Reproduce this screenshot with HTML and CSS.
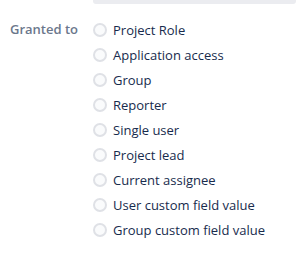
FILE: index.html
```html
<!DOCTYPE html>
<html lang="en">
<head>
    <meta charset="UTF-8">
    <title>Grant permission</title>
    <link rel="stylesheet" href="styles.css">
</head>
<body>
    <div class="field-row">
        <div class="field-label"></div>
        <div class="prev-input"></div>
    </div>
    <div class="field-row granted">
        <div class="field-label">Granted to</div>
        <div class="radio-list">
            <label class="radio"><input type="radio" name="grant"><span class="dot"></span>Project Role</label>
            <label class="radio"><input type="radio" name="grant"><span class="dot"></span>Application access</label>
            <label class="radio"><input type="radio" name="grant"><span class="dot"></span>Group</label>
            <label class="radio"><input type="radio" name="grant"><span class="dot"></span>Reporter</label>
            <label class="radio"><input type="radio" name="grant"><span class="dot"></span>Single user</label>
            <label class="radio"><input type="radio" name="grant"><span class="dot"></span>Project lead</label>
            <label class="radio"><input type="radio" name="grant"><span class="dot"></span>Current assignee</label>
            <label class="radio"><input type="radio" name="grant"><span class="dot"></span>User custom field value</label>
            <label class="radio"><input type="radio" name="grant"><span class="dot"></span>Group custom field value</label>
        </div>
    </div>
</body>
</html>
```

FILE: styles.css
```css
body {
    margin: 0;
    background: #fff;
    font-family: "Open Sans", "Noto Sans", sans-serif;
    font-size: 13px;
    color: #172b4d;
}
.field-row {
    display: flex;
}
.field-label {
    width: 93px;
    flex-shrink: 0;
    box-sizing: border-box;
    padding-left: 10px;
    color: #6b778c;
    font-weight: 600;
}
.prev-input {
    flex: 1;
    height: 4px;
    margin-right: 1px;
    background: #ebecf0;
    border-radius: 0 0 3px 3px;
}
.granted {
    margin-top: 13px;
}
.granted .field-label {
    line-height: 25px;
}
.radio-list {
    display: flex;
    flex-direction: column;
}
.radio {
    display: flex;
    align-items: center;
    height: 25px;
    cursor: pointer;
}
.radio input {
    display: none;
}
.dot {
    width: 10px;
    height: 10px;
    border: 2px solid #dfe1e6;
    border-radius: 50%;
    background: #fafbfc;
    margin-right: 6px;
}
```
